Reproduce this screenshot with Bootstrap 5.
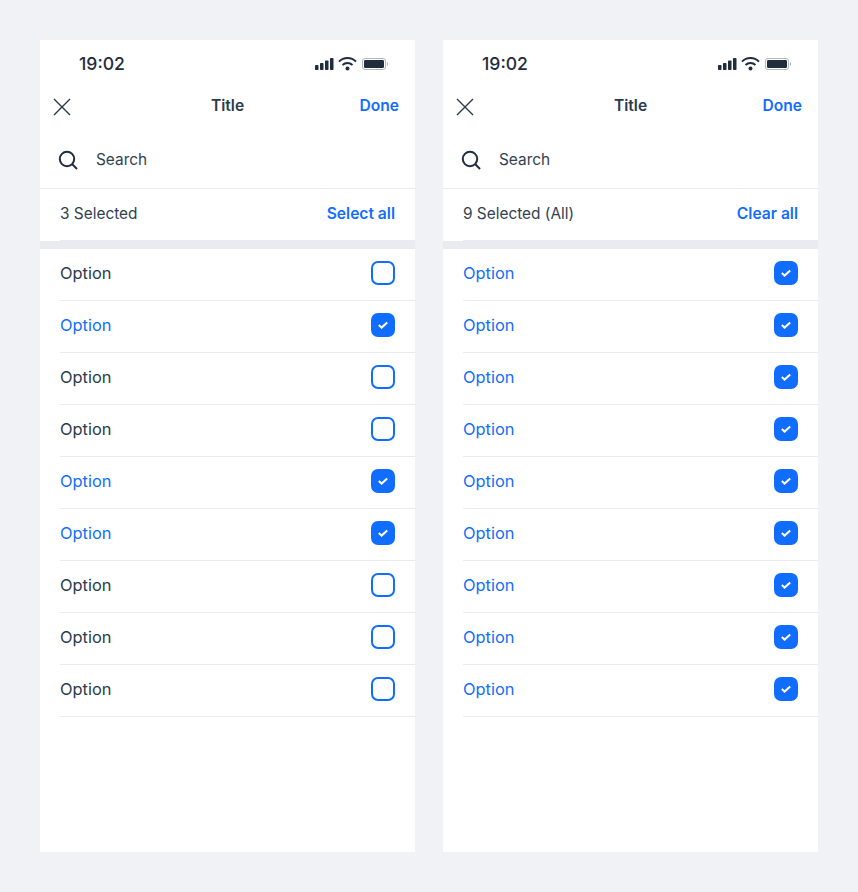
<!DOCTYPE html>
<html lang="en"><head><meta charset="utf-8"><title>Select</title>
<link href="https://cdn.jsdelivr.net/npm/bootstrap@5.3.0/dist/css/bootstrap.min.css" rel="stylesheet">
<style>
html,body{height:100%}
body{background:#f0f2f6;font-family:Inter,"Liberation Sans",sans-serif;color:#2b3a4b;font-size:16px;line-height:24px}
.stage{padding:40px;gap:28px;height:892px;width:858px}
.phone{width:375px;height:812px;background:#fff}
.status{height:44px;padding:6px 26px 2px 39px;font-size:17.6px;font-weight:500;color:#1f2d3d}
.topbar{height:44px;padding:0 16px 0 12px}
.title{font-weight:600;font-size:15.6px}
.act{color:#116dff;font-weight:600;font-size:15.6px}
.searchrow{height:61px;padding:4px 20px 0 18px;border-bottom:1px solid #e8ebef;gap:18px;font-size:15.4px;color:#324151;font-weight:375}
.selrow{height:51px;padding:0 20px 2px;font-size:15.4px;color:#324151;font-weight:375}
.selline{height:1px;margin-left:20px;background:#e8ebef}
.band{height:8px;background:#e8ebf0}
.opt{height:52px;margin-left:20px;padding:0 20px 4px 0;border-bottom:1px solid #e8ebef;font-size:16.4px;font-weight:375}
.opt.on{color:#116dff}
.tick{width:24px;height:24px;border-radius:7px;border:2px solid #116dff;background:#fff}
.on .tick{background:#116dff}
</style></head><body>
<div class="stage d-flex">
<section class="phone d-flex flex-column" id="a"></section>
<section class="phone d-flex flex-column" id="b"></section>
</div>
<template id="t">
<div class="status d-flex align-items-center justify-content-between"><span>19:02</span>
<svg width="75" height="14" viewBox="0 0 75 14"><g fill="#1f2d3d"><rect x="1" y="8" width="3.500" height="5" rx=".8"/><rect x="6" y="6" width="3.500" height="7" rx=".8"/><rect x="11" y="3.500" width="3.500" height="9.500" rx=".8"/><rect x="16" y="1" width="3.500" height="12" rx=".8"/><circle cx="33.500" cy="11.500" r="2"/></g><g fill="none" stroke="#1f2d3d" stroke-width="2"><path d="M25 4.600a12 12 0 0 1 17 0"/><path d="M28.500 8a7.200 7.200 0 0 1 10 0"/></g><rect x="48.500" y="1.500" width="23" height="11" rx="2.500" fill="none" stroke="#aeb6bf"/><rect x="50" y="3" width="20" height="8" rx="1.200" fill="#1f2d3d"/><rect x="73" y="5.500" width="1" height="3" fill="#aeb6bf"/></svg></div>
<div class="topbar d-flex align-items-center justify-content-between position-relative">
<svg width="20" height="22" viewBox="0 -2 20 22"><path d="M2 2l16 16M18 2L2 18" stroke="#2b3a4b" stroke-width="1.400" fill="none"/></svg>
<span class="title position-absolute start-50 translate-middle-x">Title</span><span class="act">Done</span></div>
<div class="searchrow d-flex align-items-center"><svg width="20" height="20" viewBox="0 0 20 20"><circle cx="9" cy="9" r="7.200" fill="none" stroke="#1f2d3d" stroke-width="2"/><path d="M14 14l5 5" stroke="#1f2d3d" stroke-width="2"/></svg><span>Search</span></div>
<div class="selrow d-flex align-items-center justify-content-between"><span class="cnt"></span><span class="act lnk"></span></div>
<div class="selline"></div><div class="band"></div><div class="opts"></div>
</template>
<script>
const check='<svg width="20" height="20" viewBox="0 0 20 20"><path d="M5.800 10l2.800 2.600L14.200 7.400" fill="none" stroke="#fff" stroke-width="2"/></svg>';
function fill(id,cnt,lnk,sel){const r=document.getElementById(id);r.append(document.getElementById('t').content.cloneNode(true));
r.querySelector('.cnt').textContent=cnt;r.querySelector('.lnk').textContent=lnk;
let h='';for(let i=0;i<9;i++){const on=sel.includes(i);h+=`<div class="opt d-flex align-items-center justify-content-between ${on?'on':''}"><span>Option</span><span class="tick d-flex align-items-center justify-content-center">${on?check:''}</span></div>`}
r.querySelector('.opts').innerHTML=h}
fill('a','3 Selected','Select all',[1,4,5]);fill('b','9 Selected (All)','Clear all',[0,1,2,3,4,5,6,7,8]);
</script>
<script src="https://cdn.jsdelivr.net/npm/bootstrap@5.3.0/dist/js/bootstrap.bundle.min.js"></script>
</body></html>
